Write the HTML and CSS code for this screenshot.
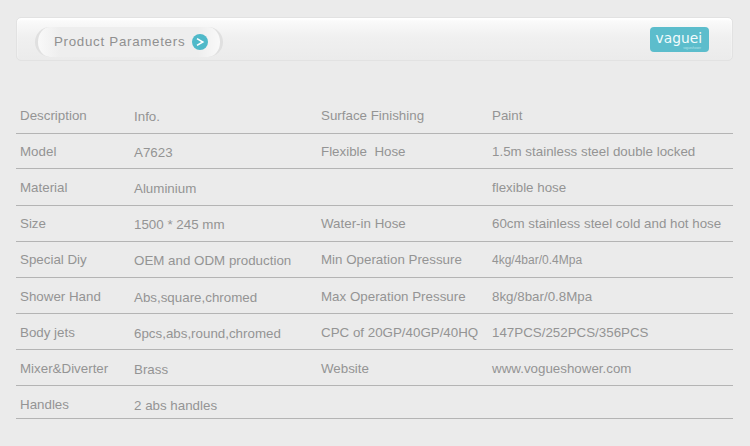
FILE: index.html
```html
<!DOCTYPE html>
<html lang="en">
<head>
<meta charset="utf-8">
<title>Product Parameters</title>
<link rel="stylesheet" href="styles.css">
</head>
<body>
<header class="bar">
  <div class="pill">
    <span class="pill-title">Product Parameters</span>
    <span class="go"><svg width="16" height="16" viewBox="0 0 16 16"><circle cx="8" cy="8" r="8" fill="#4fb9c9"/><path d="M5 4.6 10.8 8 5 11.4" fill="none" stroke="#fff" stroke-width="1.6"/></svg></span>
  </div>
  <div class="logo"><span class="logo-name">vaguei</span><span class="logo-sub">vogueshower</span></div>
</header>
<main class="table">
  <div class="row r36"><span>Description</span><span class="v">Info.</span><span>Surface Finishing</span><span>Paint</span></div>
  <div class="row r35"><span>Model</span><span class="v">A7623</span><span>Flexible&nbsp; Hose</span><span>1.5m stainless steel double locked</span></div>
  <div class="row r37"><span>Material</span><span class="v">Aluminium</span><span></span><span>flexible hose</span></div>
  <div class="row r36"><span>Size</span><span class="v">1500 * 245 mm</span><span>Water-in Hose</span><span>60cm stainless steel cold and hot hose</span></div>
  <div class="row r36"><span>Special Diy</span><span class="v">OEM and ODM production</span><span>Min Operation Pressure</span><span class="small">4kg/4bar/0.4Mpa</span></div>
  <div class="row r36 low"><span>Shower Hand</span><span class="v">Abs,square,chromed</span><span>Max Operation Pressure</span><span>8kg/8bar/0.8Mpa</span></div>
  <div class="row r36 low"><span>Body jets</span><span class="v">6pcs,abs,round,chromed</span><span>CPC of 20GP/40GP/40HQ</span><span>147PCS/252PCS/356PCS</span></div>
  <div class="row r36 low"><span>Mixer&amp;Diverter</span><span class="v">Brass</span><span>Website</span><span>www.vogueshower.com</span></div>
  <div class="row r33 lowest"><span>Handles</span><span class="v">2 abs handles</span><span></span><span></span></div>
</main>
</body>
</html>
```
FILE: styles.css
```css
* { box-sizing: border-box; }
html, body { margin: 0; height: 446px; overflow: hidden; }
body {
  background: #ebebeb;
  font-family: "Liberation Sans", Arial, sans-serif;
  font-size: 13.35px;
  color: #949494;
  padding: 17px 17px 0 16px;
}
.bar {
  height: 44px;
  display: flex;
  align-items: center;
  justify-content: space-between;
  padding: 5px 23px 0 18px;
  border: 1px solid #e2e2e2;
  border-radius: 5px;
  background: linear-gradient(#fcfcfc 0, #f0f0f0 45%, #ebebeb 100%);
  box-shadow: inset 0 2px 2px #fff;
}
.pill {
  height: 30px;
  width: 188px;
  display: flex;
  align-items: center;
  gap: 7px;
  padding-left: 16px;
  border-radius: 15px;
  border-left: 3px solid #e0e0e0;
  border-right: 3px solid #e0e0e0;
  background: linear-gradient(90deg, #f9f9f9, #eeeeee 12%, #eeeeee 88%, #f9f9f9);
}
.pill-title { letter-spacing: 0.7px; color: #909090; }
.go { display: flex; }
.logo {
  width: 59px;
  height: 25px;
  margin-top: -5px;
  padding: 3px 8px 0 0;
  background: #5cbdcc;
  border-radius: 4px;
  display: flex;
  flex-direction: column;
  align-items: flex-end;
  justify-content: center;
}
.logo-name {
  color: #f2fbfc;
  font-family: "DejaVu Sans", sans-serif;
  font-size: 13.8px;
  line-height: 13px;
  margin-right: -1px;
}
.logo-sub {
  height: 4px;
  margin-top: 1px;
  font-size: 3px;
  line-height: 4px;
  color: #b8e4ea;
}
.table { margin-top: 37px; width: 717px; }
.row {
  display: grid;
  grid-template-columns: 114px 187px 171px 1fr;
  align-items: center;
  padding-left: 4px;
  border-bottom: 1px solid #b4b4b4;
}
.r33 { height: 33px; }
.r35 { height: 35px; }
.r36 { height: 36px; }
.r37 { height: 37px; }
.low { padding-top: 2px; }
.lowest { padding-top: 4px; }
.v { position: relative; top: 1px; }
.small { font-size: 12px; }
```
